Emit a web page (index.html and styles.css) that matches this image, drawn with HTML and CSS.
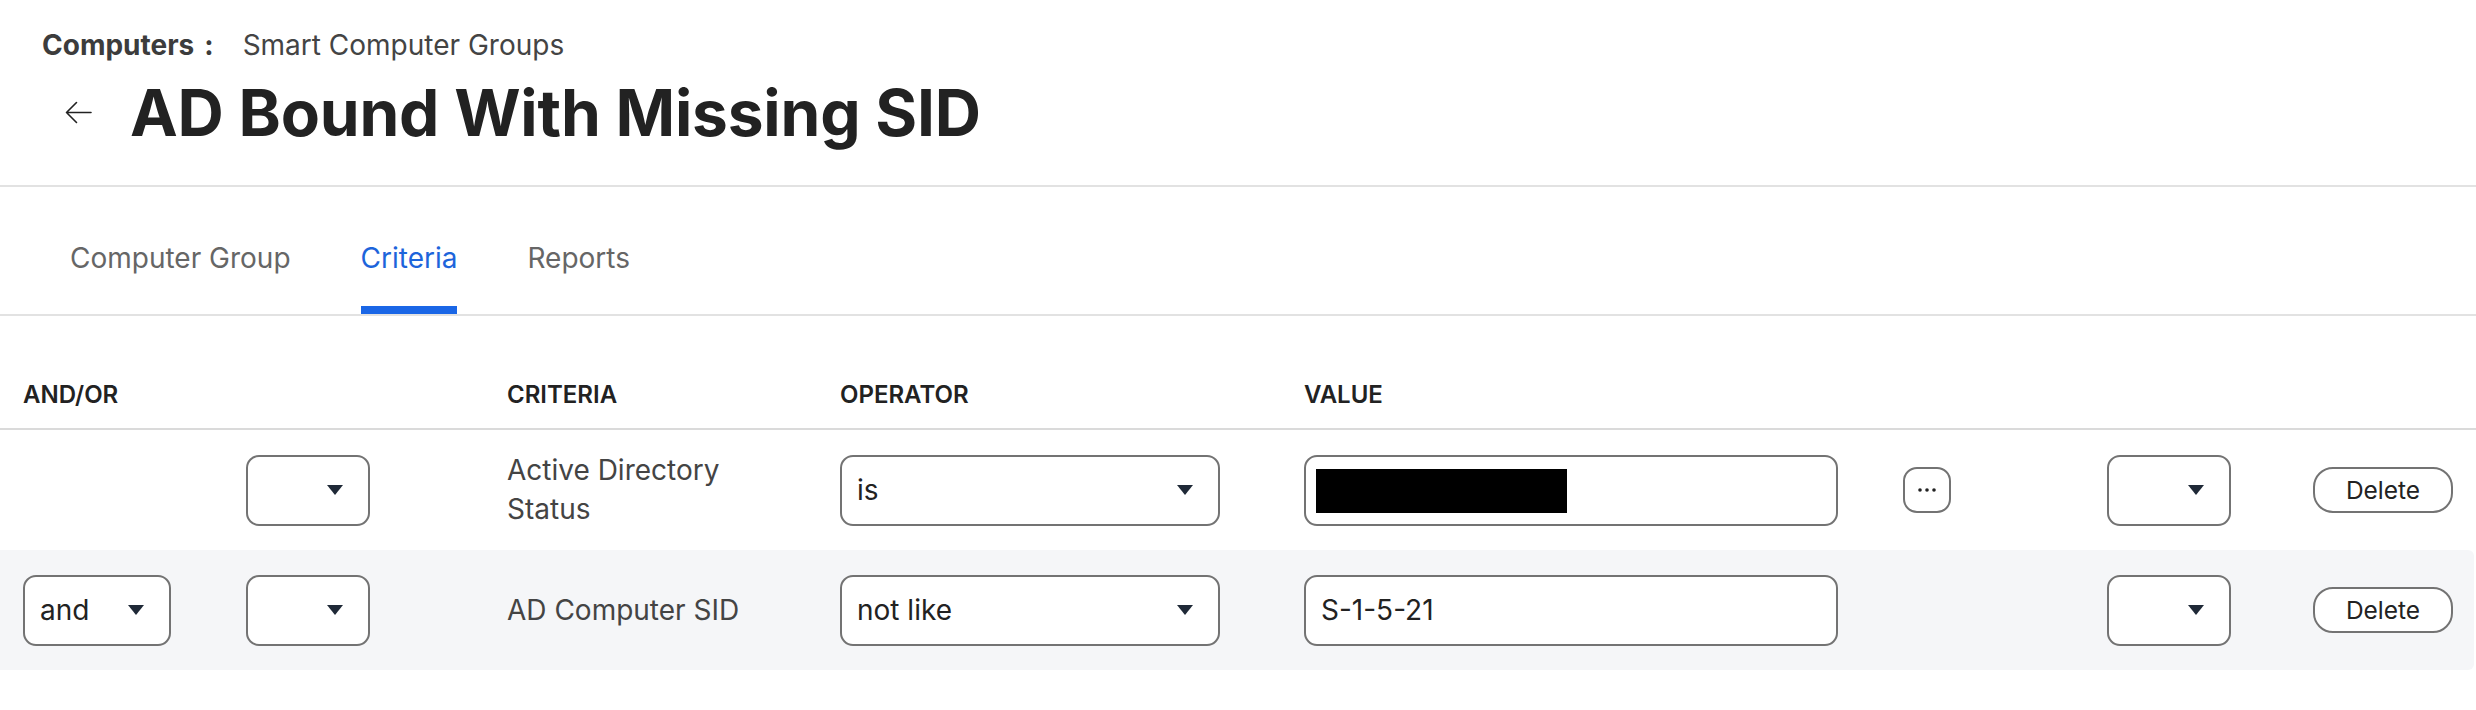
FILE: index.html
```html
<!DOCTYPE html>
<html lang="en">
<head>
<meta charset="utf-8">
<title>AD Bound With Missing SID</title>
<link rel="stylesheet" href="styles.css">
</head>
<body>
<header class="page-header">
  <nav class="breadcrumb">
    <span class="crumb-root">Computers</span><span class="crumb-sep">:</span><span class="crumb-current">Smart Computer Groups</span>
  </nav>
  <div class="title-row">
    <button class="back-btn" aria-label="Back">
      <svg width="27" height="23" viewBox="0 0 27 23" fill="none" stroke="#222" stroke-width="1.6" stroke-linecap="round" stroke-linejoin="round"><path d="M26 11.5H1.5M11.5 1.5L1.5 11.5L11.5 21.5"/></svg>
    </button>
    <h1 class="title">AD Bound With Missing SID</h1>
  </div>
</header>

<nav class="tabs">
  <a class="tab">Computer Group</a>
  <a class="tab active">Criteria</a>
  <a class="tab">Reports</a>
</nav>

<section class="criteria-table">
  <div class="grid head">
    <div class="th">AND/OR</div>
    <div class="th"></div>
    <div class="th">CRITERIA</div>
    <div class="th">OPERATOR</div>
    <div class="th">VALUE</div>
    <div class="th"></div>
    <div class="th"></div>
    <div class="th"></div>
  </div>

  <div class="grid row">
    <div class="cell"></div>
    <div class="cell"><div class="select sel-small"><span></span><i class="caret"></i></div></div>
    <div class="cell crit">Active Directory Status</div>
    <div class="cell"><div class="select sel-op"><span>is</span><i class="caret"></i></div></div>
    <div class="cell"><div class="input"><span class="redacted"></span></div></div>
    <div class="cell"><button class="more-btn" aria-label="More"><svg width="18" height="4" viewBox="0 0 18 4"><circle cx="2" cy="2" r="1.8" fill="#222"/><circle cx="9" cy="2" r="1.8" fill="#222"/><circle cx="16" cy="2" r="1.8" fill="#222"/></svg></button></div>
    <div class="cell"><div class="select sel-small"><span></span><i class="caret"></i></div></div>
    <div class="cell"><button class="delete-btn">Delete</button></div>
  </div>

  <div class="grid row alt">
    <div class="cell"><div class="select sel-and"><span>and</span><i class="caret"></i></div></div>
    <div class="cell"><div class="select sel-small"><span></span><i class="caret"></i></div></div>
    <div class="cell crit">AD Computer SID</div>
    <div class="cell"><div class="select sel-op"><span>not like</span><i class="caret"></i></div></div>
    <div class="cell"><div class="input"><span class="value">S-1-5-21</span></div></div>
    <div class="cell"></div>
    <div class="cell"><div class="select sel-small"><span></span><i class="caret"></i></div></div>
    <div class="cell"><button class="delete-btn">Delete</button></div>
  </div>
</section>
</body>
</html>
```

FILE: styles.css
```css
* { box-sizing: border-box; }

html, body {
  margin: 0;
  padding: 0;
  background: #ffffff;
}

body {
  font-family: Inter, "Noto Sans", "Liberation Sans", sans-serif;
  color: #222222;
  width: 2476px;
}

button {
  font-family: inherit;
}

/* ---------- header ---------- */
.page-header {
  padding: 27px 0 34px 42px;
  border-bottom: 2px solid #e2e2e2;
}

.breadcrumb {
  font-size: 28px;
  line-height: 36px;
  display: flex;
  align-items: baseline;
}

.crumb-root {
  font-weight: 700;
  color: #3c3c3c;
}

.crumb-sep {
  font-weight: 700;
  color: #3c3c3c;
  margin-left: 10px;
  margin-right: 29px;
}

.crumb-current {
  color: #444444;
}

.title-row {
  display: flex;
  align-items: center;
  margin-top: 11px;
}

.back-btn {
  width: 72px;
  height: 72px;
  border: 0;
  padding: 0;
  background: transparent;
  display: flex;
  align-items: center;
  justify-content: center;
  margin-right: 16px;
}

.title {
  margin: 0;
  font-size: 64px;
  line-height: 77px;
  font-weight: 700;
  color: #222222;
  letter-spacing: -0.2px;
}

/* ---------- tabs ---------- */
.tabs {
  display: flex;
  gap: 70px;
  padding: 53px 0 0 70px;
  border-bottom: 2px solid #e2e2e2;
}

.tab {
  font-size: 28px;
  line-height: 36px;
  color: #666666;
  padding-bottom: 30px;
  border-bottom: 8px solid transparent;
}

.tab.active {
  color: #1d64db;
  border-bottom-color: #1a66e6;
}

/* ---------- criteria table ---------- */
.grid {
  display: grid;
  grid-template-columns: 223px 261px 333px 464px 599px 204px 206px 140px;
  padding-left: 23px;
}

.head {
  padding-top: 64px;
  padding-bottom: 18px;
  border-bottom: 2px solid #dadada;
}

.th {
  font-size: 24px;
  line-height: 30px;
  font-weight: 600;
  color: #222222;
}

.row {
  height: 120px;
  align-items: center;
}

.row.alt {
  background: #f5f6f8;
  margin-right: 2px;
  border-radius: 0 6px 6px 0;
}

.cell {
  display: flex;
  align-items: center;
}

.crit {
  font-size: 28px;
  line-height: 39px;
  color: #444444;
  max-width: 262px;
}

.select {
  height: 71px;
  border: 2px solid #737373;
  border-radius: 13px;
  background: #ffffff;
  display: flex;
  align-items: center;
  justify-content: space-between;
  padding: 0 25px 0 15px;
  font-size: 28px;
  color: #222222;
}

.sel-small { width: 124px; }
.sel-and { width: 148px; }
.sel-op { width: 380px; }

.caret {
  width: 0;
  height: 0;
  border-left: 8.5px solid transparent;
  border-right: 8.5px solid transparent;
  border-top: 10px solid #1f2937;
}

.input {
  width: 534px;
  height: 71px;
  border: 2px solid #737373;
  border-radius: 13px;
  background: #ffffff;
  display: flex;
  align-items: center;
  padding: 0 15px 0 10px;
  font-size: 28px;
  color: #222222;
}

.input .value {
  padding-left: 5px;
}

.redacted {
  display: block;
  width: 251px;
  height: 44px;
  background: #000000;
  margin-top: 2px;
}

.more-btn {
  width: 48px;
  height: 46px;
  border: 2px solid #737373;
  border-radius: 14px;
  background: #ffffff;
  display: flex;
  align-items: center;
  justify-content: center;
  padding: 0;
}

.delete-btn {
  width: 140px;
  height: 46px;
  border: 2px solid #737373;
  border-radius: 20px;
  background: #ffffff;
  font-size: 24.5px;
  color: #222222;
  padding: 0;
}
```
